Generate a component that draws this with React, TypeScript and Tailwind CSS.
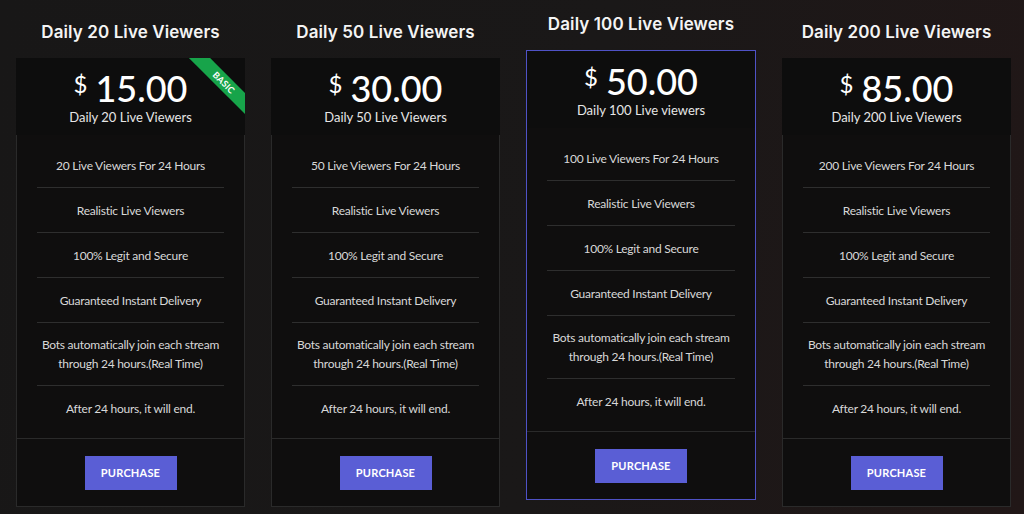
import React from "react";

type Plan = {
  title: string;
  price: string;
  sub: string;
  count: string;
  featured?: boolean;
  ribbon?: boolean;
};

const plans: Plan[] = [
  { title: "Daily 20 Live Viewers", price: "15.00", sub: "Daily 20 Live Viewers", count: "20", ribbon: true },
  { title: "Daily 50 Live Viewers", price: "30.00", sub: "Daily 50 Live Viewers", count: "50" },
  { title: "Daily 100 Live Viewers", price: "50.00", sub: "Daily 100 Live viewers", count: "100", featured: true },
  { title: "Daily 200 Live Viewers", price: "85.00", sub: "Daily 200 Live Viewers", count: "200" },
];

function Card({ p }: { p: Plan }) {
  const features = [
    `${p.count} Live Viewers For 24 Hours`,
    "Realistic Live Viewers",
    "100% Legit and Secure",
    "Guaranteed Instant Delivery",
  ];
  const side = p.featured ? "" : "border-x border-[#2a2a2a]";
  return (
    <div className={p.featured ? "flex flex-col pt-[12px]" : "flex flex-col pt-[20px]"}>
      <h2 className="text-center text-[17px] leading-[24px] font-semibold text-[#f4f4f4] font-['Inter',sans-serif] tracking-[0.1px]">
        {p.title}
      </h2>
      <div className={p.featured ? "mt-[14px] border border-[#4f52c6] bg-[#0f0e0e]" : "mt-[14px] bg-[#0f0e0e]"}>
        <div className="relative overflow-hidden bg-[#0d0d0d] pt-[11px] pb-[9px] text-center">
          {p.ribbon && (
            <div className="absolute left-[161px] top-[17px] w-[94px] h-[15px] rotate-45 bg-[#17a44a] flex items-center justify-center">
              <span className="text-[9px] leading-none font-bold text-white tracking-[0.2px]">BASIC</span>
            </div>
          )}
          <div className="flex justify-center items-start text-white">
            <span className="text-[24px] leading-[24px] mt-[3px] mr-[8px]">$</span>
            <span className="text-[36px] leading-[38px] font-medium">{p.price}</span>
          </div>
          <div className="mt-[1px] text-[13px] leading-[18px] text-[#e6e6e6]">{p.sub}</div>
        </div>
        <div className={`${side} border-b border-[#2a2a2a] px-[20px] pt-[8px] pb-[8px]`}>
          {features.map((f) => (
            <div
              key={f}
              className="border-b border-[#2e2e2e] pt-[13px] pb-[12px] text-center text-[12px] leading-[19px] text-[#d8d8d8] tracking-[-0.25px]"
            >
              {f}
            </div>
          ))}
          <div className="border-b border-[#2e2e2e] pt-[12px] pb-[12px] text-center text-[12px] leading-[19px] text-[#d8d8d8] tracking-[-0.25px]">
            Bots automatically join each stream
            <br />
            through 24 hours.(Real Time)
          </div>
          <div className="pt-[13px] pb-[12px] text-center text-[12px] leading-[19px] text-[#d8d8d8] tracking-[-0.25px]">
            After 24 hours, it will end.
          </div>
        </div>
        <div className={`${side} ${p.featured ? "" : "border-b border-[#2a2a2a]"} pt-[17px] pb-[16px] flex justify-center`}>
          <button className="w-[92px] h-[34px] bg-[#5a5ed5] text-white text-[11px] font-bold tracking-[0.2px]">
            PURCHASE
          </button>
        </div>
      </div>
    </div>
  );
}

export default function App() {
  return (
    <div className="w-[1024px] h-[514px] overflow-hidden bg-[linear-gradient(100deg,#181717_0%,#1a1818_55%,#211717_100%)] font-['Lato',sans-serif]">
      <div className="grid grid-cols-[229px_229px_230px_229px] gap-x-[26px] pl-[16px]">
        {plans.map((p) => (
          <Card key={p.title} p={p} />
        ))}
      </div>
    </div>
  );
}
